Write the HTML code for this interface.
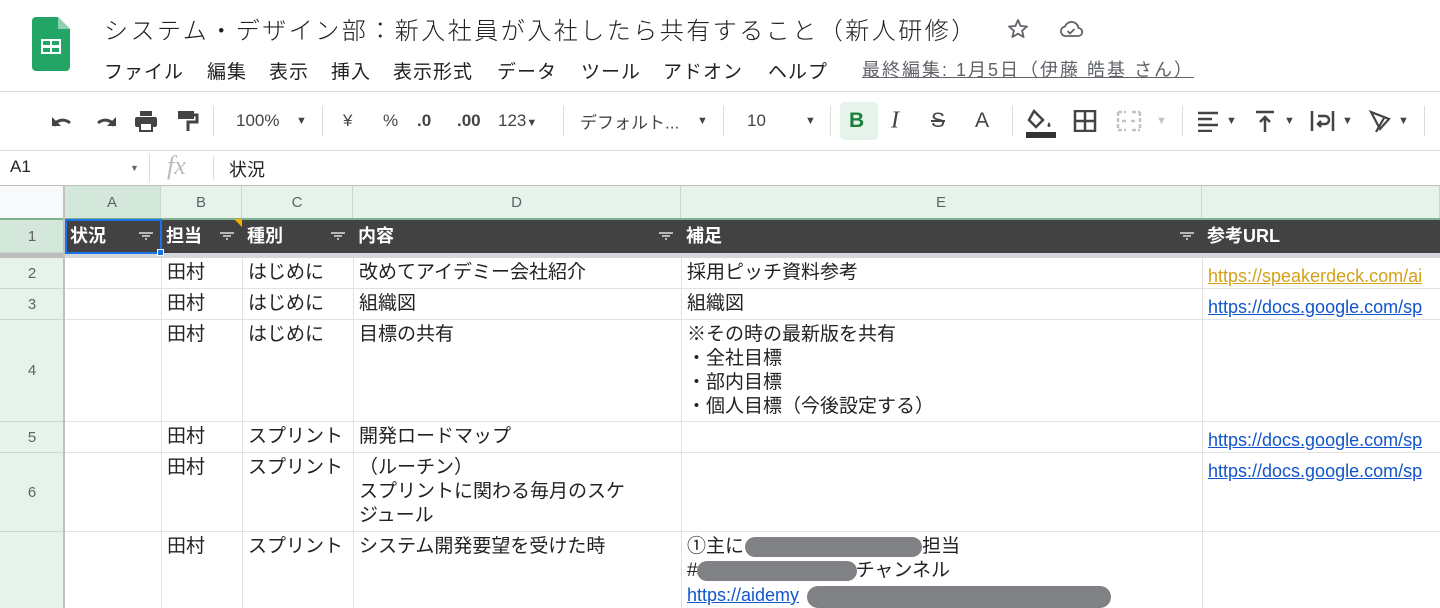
<!DOCTYPE html>
<html><head><meta charset="utf-8">
<style>
*{margin:0;padding:0;box-sizing:border-box}
body{width:1440px;height:608px;overflow:hidden;background:#fff;font-family:"Liberation Sans","Noto Sans CJK JP",sans-serif;color:#202124;position:relative}
.a{position:absolute;white-space:nowrap}
.t{font-size:19px;line-height:24px;color:#222}
.hl{position:absolute;height:1px;background:#e2e2e2}
.vl{position:absolute;width:1px;background:#e2e2e2}
.ch{position:absolute;top:186px;height:33px;background:#e6f3ea;border-right:1px solid #c8d8cc;font-size:15px;color:#5f6368;text-align:center;line-height:33px}
.rh{position:absolute;left:0;width:64px;background:#e6f3ea;border-bottom:1px solid #c8d8cc;font-size:15px;color:#5f6368;text-align:center}
.hd{position:absolute;top:220px;height:33px;color:#fff;font-weight:bold;font-size:18px;line-height:33px;padding-left:5px}
.flt{position:absolute;top:14px;width:14px;height:8px}
.lk{color:#1155cc;text-decoration:underline}
.blur{position:absolute;background:#808184;border-radius:11px;height:20px}
.tb{position:absolute;top:121px;transform:translateY(-50%);color:#444;font-size:17px}
.mn{position:absolute;top:57px;font-size:19px;color:#202124;letter-spacing:1px}
</style></head><body>
<!-- logo -->
<svg class="a" style="left:32px;top:17px" width="38" height="54" viewBox="0 0 38 54"><path d="M4 0H26L38 12V50a4 4 0 0 1-4 4H4a4 4 0 0 1-4-4V4a4 4 0 0 1 4-4z" fill="#23a566"/><path d="M26 0V12H38z" fill="#8ed1b1"/><rect x="9" y="22" width="20" height="15" fill="#fff"/><rect x="11" y="24" width="7" height="4" fill="#23a566"/><rect x="20" y="24" width="7" height="4" fill="#23a566"/><rect x="11" y="31" width="7" height="4" fill="#23a566"/><rect x="20" y="31" width="7" height="4" fill="#23a566"/></svg>
<div class="a" style="left:104px;top:11px;font-size:24px;color:#202124;letter-spacing:2.5px;font-weight:300">システム・デザイン部：新入社員が入社したら共有すること（新人研修）</div>
<svg class="a" style="left:1006px;top:17px" width="24" height="24" viewBox="0 0 24 24"><path d="M12 3l2.6 6 6.4.5-4.9 4.2 1.5 6.3L12 16.7 6.4 20l1.5-6.3L3 9.5 9.4 9z" fill="none" stroke="#5f6368" stroke-width="1.8" stroke-linejoin="round"/></svg>
<svg class="a" style="left:1058px;top:17px" width="26" height="24" viewBox="0 0 26 24"><path d="M7 19h13a4 4 0 0 0 .5-8A7 7 0 0 0 7 9.5 4.8 4.8 0 0 0 7 19z" fill="none" stroke="#5f6368" stroke-width="1.8"/><path d="M9.5 14l2.5 2.5 4.5-4.5" fill="none" stroke="#5f6368" stroke-width="1.8"/></svg>
<div class="mn" style="left:104px">ファイル</div>
<div class="mn" style="left:207px">編集</div>
<div class="mn" style="left:269px">表示</div>
<div class="mn" style="left:331px">挿入</div>
<div class="mn" style="left:393px">表示形式</div>
<div class="mn" style="left:497px">データ</div>
<div class="mn" style="left:581px">ツール</div>
<div class="mn" style="left:663px">アドオン</div>
<div class="mn" style="left:768px">ヘルプ</div>
<div class="a" style="left:862px;top:56px;font-size:18px;color:#5f6368;text-decoration:underline;letter-spacing:2px">最終編集: 1月5日（伊藤 皓基 さん）</div>
<div class="hl" style="left:0;top:91px;width:1440px;background:#dadce0"></div>
<!-- toolbar -->
<svg class="a" style="left:50px;top:110px" width="26" height="22" viewBox="0 0 26 22"><path d="M4 16c2-6 10-8 16-3" fill="none" stroke="#444" stroke-width="3"/><path d="M2 7v9h9z" fill="#444"/></svg>
<svg class="a" style="left:92px;top:110px" width="26" height="22" viewBox="0 0 26 22"><path d="M22 16c-2-6-10-8-16-3" fill="none" stroke="#444" stroke-width="3"/><path d="M24 7v9h-9z" fill="#444"/></svg>
<svg class="a" style="left:133px;top:109px" width="26" height="24" viewBox="0 0 26 24"><rect x="7" y="2" width="12" height="5" fill="#444"/><rect x="2" y="8" width="22" height="10" rx="2" fill="#444"/><rect x="7" y="14" width="12" height="8" fill="#fff" stroke="#444" stroke-width="2"/></svg>
<svg class="a" style="left:175px;top:109px" width="24" height="24" viewBox="0 0 24 24"><rect x="3" y="2" width="16" height="8" fill="#444"/><path d="M19 6h3v7h-9v9" fill="none" stroke="#444" stroke-width="3"/></svg>
<div class="vl" style="left:213px;top:106px;height:30px;background:#dadce0"></div>
<div class="tb" style="left:236px">100%</div><div class="tb" style="left:296px;font-size:11px">▼</div>
<div class="vl" style="left:322px;top:106px;height:30px;background:#dadce0"></div>
<div class="tb" style="left:343px">¥</div><div class="tb" style="left:383px">%</div>
<div class="tb" style="left:417px;font-weight:bold">.0</div><div class="tb" style="left:457px;font-weight:bold">.00</div>
<div class="tb" style="left:498px">123<span style="font-size:11px">▼</span></div>
<div class="vl" style="left:563px;top:106px;height:30px;background:#dadce0"></div>
<div class="tb" style="left:580px">デフォルト...</div><div class="tb" style="left:697px;font-size:11px">▼</div>
<div class="vl" style="left:723px;top:106px;height:30px;background:#dadce0"></div>
<div class="tb" style="left:747px">10</div><div class="tb" style="left:805px;font-size:11px">▼</div>
<div class="vl" style="left:830px;top:106px;height:30px;background:#dadce0"></div>
<div class="a" style="left:840px;top:102px;width:38px;height:38px;background:#e6f3ea;border-radius:4px"></div>
<div class="tb" style="left:849px;font-weight:bold;color:#188038;font-size:21px">B</div>
<div class="tb" style="left:891px;font-style:italic;font-family:'Liberation Serif',serif;font-size:24px">I</div>
<div class="tb" style="left:931px;font-size:21px;text-decoration:line-through">S</div>
<div class="tb" style="left:975px;font-size:21px">A</div>
<div class="vl" style="left:1012px;top:106px;height:30px;background:#dadce0"></div>
<svg class="a" style="left:1026px;top:108px" width="30" height="32" viewBox="0 0 30 32"><path d="M8 3l9 9-7 7-7-7z" fill="none" stroke="#444" stroke-width="2.5"/><path d="M23 14c-2 3-2 5 0 5s2-2 0-5z" fill="#444"/><rect x="0" y="24" width="30" height="6" fill="#333"/></svg>
<svg class="a" style="left:1073px;top:110px" width="24" height="22" viewBox="0 0 24 22"><rect x="2" y="1" width="20" height="20" fill="none" stroke="#444" stroke-width="2.5"/><path d="M12 1v20M2 11h20" stroke="#444" stroke-width="2.5"/></svg>
<svg class="a" style="left:1116px;top:110px" width="26" height="22" viewBox="0 0 26 22"><path d="M2 2h8M16 2h8M2 20h8M16 20h8M2 2v18M24 2v18M6 11h5M15 11h5" stroke="#c4c4c4" stroke-width="2.5" fill="none" stroke-dasharray="4 2"/></svg>
<div class="tb" style="left:1156px;font-size:11px;color:#c4c4c4">▼</div>
<div class="vl" style="left:1182px;top:106px;height:30px;background:#dadce0"></div>
<svg class="a" style="left:1196px;top:110px" width="24" height="22" viewBox="0 0 24 22"><path d="M2 3h20M2 9h14M2 15h20M2 21h14" stroke="#444" stroke-width="2.5"/></svg><div class="tb" style="left:1226px;font-size:11px">▼</div>
<svg class="a" style="left:1254px;top:110px" width="22" height="24" viewBox="0 0 22 24"><path d="M2 2h18M11 22V7M6 12l5-5 5 5" stroke="#444" stroke-width="2.5" fill="none"/></svg><div class="tb" style="left:1284px;font-size:11px">▼</div>
<svg class="a" style="left:1310px;top:110px" width="26" height="22" viewBox="0 0 26 22"><path d="M2 1v20M23 1v20M8 6h7a4 4 0 0 1 0 8H9M11 11l-3 3 3 3" stroke="#444" stroke-width="2.5" fill="none"/></svg><div class="tb" style="left:1342px;font-size:11px">▼</div>
<svg class="a" style="left:1368px;top:108px" width="26" height="26" viewBox="0 0 26 26"><path d="M3 4l18 7-9 10zM16 10l-8 14" stroke="#444" stroke-width="2.2" fill="none"/></svg><div class="tb" style="left:1398px;font-size:11px">▼</div>
<div class="vl" style="left:1424px;top:106px;height:30px;background:#dadce0"></div>
<div class="hl" style="left:0;top:150px;width:1440px;background:#dadce0"></div>
<!-- formula bar -->
<div class="a" style="left:10px;top:157px;font-size:17px;color:#222">A1</div>
<div class="a" style="left:130px;top:163px;font-size:9px;color:#666">▼</div>
<div class="vl" style="left:149px;top:154px;height:28px;background:#dadce0"></div>
<div class="a" style="left:167px;top:151px;font-size:26px;font-family:'Liberation Serif',serif;font-style:italic;color:#bbb">fx</div>
<div class="vl" style="left:213px;top:156px;height:24px;background:#dadce0"></div>
<div class="a" style="left:229px;top:156px;font-size:18px;color:#222">状況</div>
<div class="hl" style="left:0;top:185px;width:1440px;background:#c0c0c0"></div>
<!-- column headers -->
<div class="ch" style="left:0;width:64px;background:#f8f9fa"></div>
<div class="ch" style="left:64px;width:97px;background:#d3e8da">A</div>
<div class="ch" style="left:161px;width:81px">B</div>
<div class="ch" style="left:242px;width:111px">C</div>
<div class="ch" style="left:353px;width:328px">D</div>
<div class="ch" style="left:681px;width:521px">E</div>
<div class="ch" style="left:1202px;width:238px"></div>
<div class="hl" style="left:0;top:218px;width:1440px;height:2px;background:#7fb08f"></div>
<!-- row headers -->
<div class="rh" style="top:220px;height:33px;line-height:33px;background:#d3e8da">1</div>
<div class="a" style="left:0;top:253px;width:1440px;height:5px;background:#d4d7dc"></div>
<div class="a" style="left:0;top:253px;width:64px;height:5px;background:#bdbdbd"></div>
<div class="rh" style="top:258px;height:31px;line-height:31px">2</div>
<div class="rh" style="top:289px;height:31px;line-height:31px">3</div>
<div class="rh" style="top:320px;height:102px;line-height:102px">4</div>
<div class="rh" style="top:422px;height:31px;line-height:31px">5</div>
<div class="rh" style="top:453px;height:79px;line-height:79px">6</div>
<div class="rh" style="top:532px;height:76px;line-height:76px;border:none"></div>
<div class="vl" style="left:63px;top:185px;height:423px;width:2px;background:#c0c0c0"></div>
<!-- header row -->
<div class="a" style="left:65px;top:220px;width:1375px;height:33px;background:#424242"></div>
<div class="hd" style="left:65px">状況</div>
<div class="hd" style="left:161px">担当</div>
<div class="hd" style="left:242px">種別</div>
<div class="hd" style="left:353px">内容</div>
<div class="hd" style="left:681px">補足</div>
<div class="hd" style="left:1202px">参考URL</div>
<svg class="flt" style="left:139px;top:232px" viewBox="0 0 14 8"><path d="M0 1h14M3 4h8M6 7h2" stroke="#fff" stroke-width="1.3"/></svg>
<svg class="flt" style="left:220px;top:232px" viewBox="0 0 14 8"><path d="M0 1h14M3 4h8M6 7h2" stroke="#fff" stroke-width="1.3"/></svg>
<svg class="flt" style="left:331px;top:232px" viewBox="0 0 14 8"><path d="M0 1h14M3 4h8M6 7h2" stroke="#fff" stroke-width="1.3"/></svg>
<svg class="flt" style="left:659px;top:232px" viewBox="0 0 14 8"><path d="M0 1h14M3 4h8M6 7h2" stroke="#fff" stroke-width="1.3"/></svg>
<svg class="flt" style="left:1180px;top:232px" viewBox="0 0 14 8"><path d="M0 1h14M3 4h8M6 7h2" stroke="#fff" stroke-width="1.3"/></svg>
<svg class="a" style="left:234px;top:219px" width="8" height="8"><path d="M0 0h8v8z" fill="#f0b400"/></svg>
<div class="a" style="left:65px;top:219px;width:97px;height:35px;border:2px solid #1a73e8"></div>
<div class="a" style="left:157px;top:249px;width:7px;height:7px;background:#1a73e8;border:1px solid #fff"></div>
<!-- grid lines -->
<div class="hl" style="left:65px;top:288px;width:1375px"></div>
<div class="hl" style="left:65px;top:319px;width:1375px"></div>
<div class="hl" style="left:65px;top:421px;width:1375px"></div>
<div class="hl" style="left:65px;top:452px;width:1375px"></div>
<div class="hl" style="left:65px;top:531px;width:1375px"></div>
<div class="vl" style="left:161px;top:258px;height:350px"></div>
<div class="vl" style="left:242px;top:258px;height:350px"></div>
<div class="vl" style="left:353px;top:258px;height:350px"></div>
<div class="vl" style="left:681px;top:258px;height:350px"></div>
<div class="vl" style="left:1202px;top:258px;height:350px"></div>
<!-- cells -->
<div class="a t" style="left:167px;top:261px">田村</div><div class="a t" style="left:248px;top:261px">はじめに</div><div class="a t" style="left:359px;top:261px">改めてアイデミー会社紹介</div><div class="a t" style="left:687px;top:261px">採用ピッチ資料参考</div><div class="a t" style="left:1208px;top:264px;font-size:18px;color:#d4a017;text-decoration:underline">https://speakerdeck.com/ai</div>
<div class="a t" style="left:167px;top:292px">田村</div><div class="a t" style="left:248px;top:292px">はじめに</div><div class="a t" style="left:359px;top:292px">組織図</div><div class="a t" style="left:687px;top:292px">組織図</div><div class="a t lk" style="left:1208px;top:295px;font-size:18px">https://docs.google.com/sp</div>
<div class="a t" style="left:167px;top:323px">田村</div><div class="a t" style="left:248px;top:323px">はじめに</div><div class="a t" style="left:359px;top:323px">目標の共有</div><div class="a t" style="left:687px;top:323px">※その時の最新版を共有<br>・全社目標<br>・部内目標<br>・個人目標（今後設定する）</div>
<div class="a t" style="left:167px;top:425px">田村</div><div class="a t" style="left:248px;top:425px">スプリント</div><div class="a t" style="left:359px;top:425px">開発ロードマップ</div><div class="a t lk" style="left:1208px;top:428px;font-size:18px">https://docs.google.com/sp</div>
<div class="a t" style="left:167px;top:456px">田村</div><div class="a t" style="left:248px;top:456px">スプリント</div><div class="a t" style="left:359px;top:456px">（ルーチン）<br>スプリントに関わる毎月のスケ<br>ジュール</div><div class="a t lk" style="left:1208px;top:459px;font-size:18px">https://docs.google.com/sp</div>
<div class="a t" style="left:167px;top:535px">田村</div><div class="a t" style="left:248px;top:535px">スプリント</div><div class="a t" style="left:359px;top:535px">システム開発要望を受けた時</div>
<div class="a t" style="left:687px;top:535px">①主に<span style="display:inline-block;width:178px"></span>担当<br>#<span style="display:inline-block;width:158px"></span>チャンネル<br><span class="lk" style="font-size:18px">https://aidemy</span></div>
<div class="blur" style="left:745px;top:537px;width:177px"></div>
<div class="blur" style="left:697px;top:561px;width:160px"></div>
<div class="blur" style="left:807px;top:586px;width:304px;height:22px"></div>
</body></html>
